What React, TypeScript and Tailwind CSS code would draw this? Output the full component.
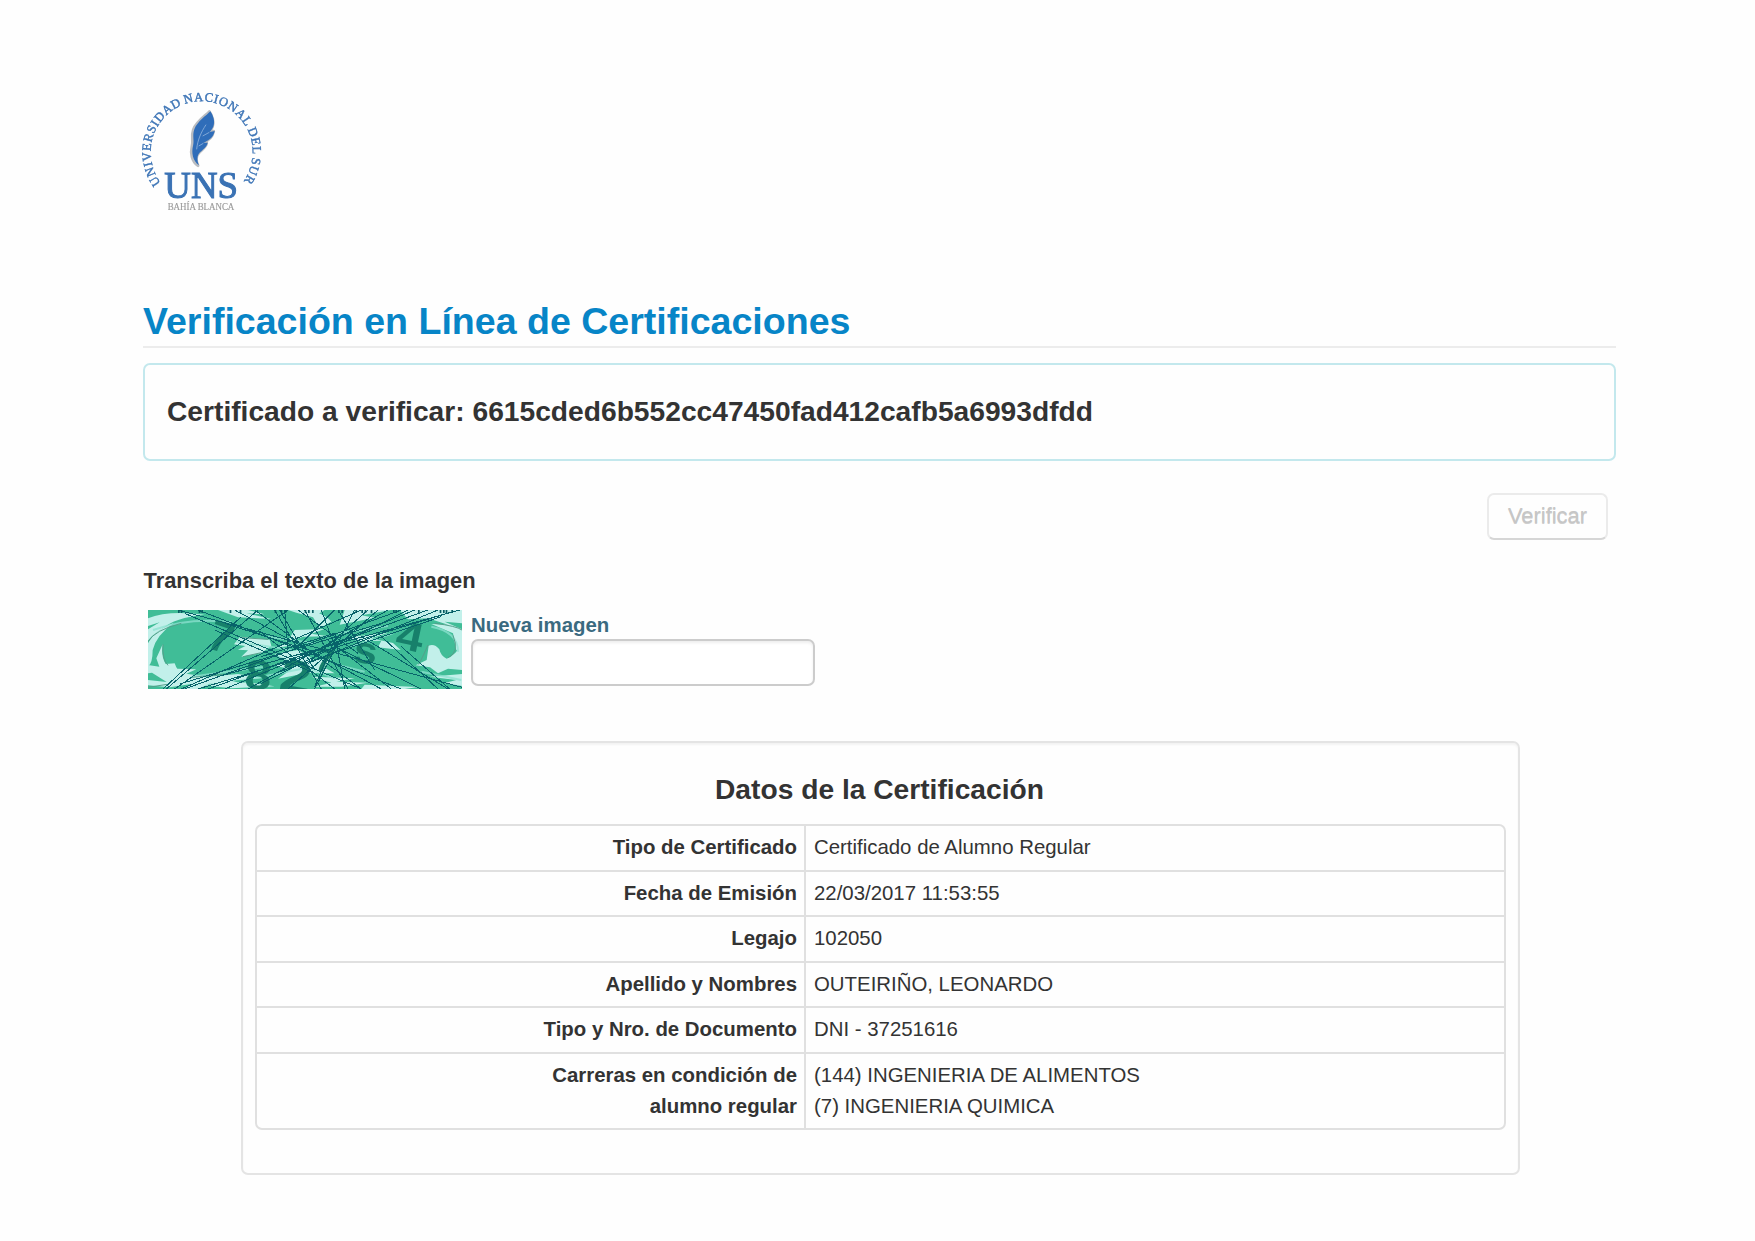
import React from "react";

const rows: { label: string[]; value: string[] }[] = [
  { label: ["Tipo de Certificado"], value: ["Certificado de Alumno Regular"] },
  { label: ["Fecha de Emisión"], value: ["22/03/2017 11:53:55"] },
  { label: ["Legajo"], value: ["102050"] },
  { label: ["Apellido y Nombres"], value: ["OUTEIRIÑO, LEONARDO"] },
  { label: ["Tipo y Nro. de Documento"], value: ["DNI - 37251616"] },
  {
    label: ["Carreras en condición de", "alumno regular"],
    value: ["(144) INGENIERIA DE ALIMENTOS", "(7) INGENIERIA QUIMICA"],
  },
];

const feather =
  "M241 94 C230 106 202 124 193 148 C186 168 194 182 189 198 C184 218 188 242 207 256 C200 240 201 226 210 217 C217 209 231 201 233 188 L220 188 C240 181 251 169 254 153 L239 156 C249 146 255 132 251 116 C248 106 245 99 241 94 Z";

function Logo() {
  return (
    <svg viewBox="0 0 435 435" className="block h-[145px] w-[145px] blur-[0.35px]" aria-label="Universidad Nacional del Sur">
      <defs>
        <path id="ring" d="M 93 309 A 153 153 0 1 1 337 309" />
      </defs>
      <text fontFamily="Liberation Serif, serif" fontSize="38" fill="#3f76b7" stroke="#3f76b7" strokeWidth="1.3" wordSpacing="-3">
        <textPath href="#ring" textLength="672" lengthAdjust="spacing">
          UNIVERSIDAD NACIONAL DEL SUR
        </textPath>
      </text>
      <path d={feather} transform="translate(-3 1)" fill="#b3b6ba" stroke="#b9bcc0" strokeWidth="9" strokeLinejoin="round" />
      <path d={feather} fill="#2f6db9" />
      <path d="M228 134 C214 156 203 178 200 208 M238 157 L218 168 M220 190 L206 198" fill="none" stroke="#8fb2dc" strokeWidth="2.5" />
      <text x="103" y="353" textLength="221" lengthAdjust="spacingAndGlyphs" fontFamily="Liberation Serif, serif" fontSize="111" fill="#3a72b4" stroke="#3a72b4" strokeWidth="3">
        UNS
      </text>
      <text x="113" y="389" textLength="200" lengthAdjust="spacingAndGlyphs" fontFamily="Liberation Serif, serif" fontSize="29" fill="#9a9a9a" stroke="#9a9a9a" strokeWidth="0.5">
        BAHÍA BLANCA
      </text>
    </svg>
  );
}

const strands = [
  "M90 0L942 232", "M150 0L760 237", "M55 237L330 0", "M80 237L420 0", "M45 237L280 20", "M100 237L640 0",
  "M110 237L760 0", "M150 237L905 8", "M180 237L840 0", "M95 222L700 40", "M210 200L935 0", "M110 10L640 237",
  "M260 0L700 237", "M320 0L640 237", "M380 0L520 237", "M395 0L500 180", "M410 0L420 120", "M470 0L600 237",
  "M450 0L630 130", "M560 0L440 120", "M570 0L680 180", "M620 0L500 237", "M660 0L490 150", "M690 0L420 237",
  "M720 0L300 237", "M780 0L340 220", "M800 0L230 237", "M540 90L730 237", "M560 110L820 237", "M640 80L900 237",
  "M690 70L870 237", "M760 110L905 237", "M230 40L480 120", "M200 60L500 190", "M330 60L560 237", "M870 0L480 160",
  "M880 20L380 190", "M340 140L560 70", "M370 170L610 80", "M500 230L560 90", "M590 237L560 70", "M520 0L560 110",
];

const ticks = [90, 98, 152, 160, 245, 275, 380, 398, 410, 470, 480, 492, 570, 580, 622, 640, 650, 668, 735, 742, 810, 875, 885, 893, 910];

function Captcha() {
  return (
    <div className="h-[79px] w-[314px] overflow-hidden">
      <svg viewBox="0 0 942 237" preserveAspectRatio="none" className="block h-[79px] w-[314px] blur-[0.4px]">
        <rect width="942" height="237" fill="#40bd97" />
        <g fill="#c2f0ea">
          <path d="M0 25Q60 0 170 14Q80 22 42 57Q12 75 0 92V58L35 37L0 48Z" />
          <path d="M0 100Q18 62 78 38Q25 75 14 120Q14 160 0 170Z" />
          <path d="M44 103Q38 136 53 162L80 160Q84 172 88 176L145 178L115 191L178 200L270 192L345 204L250 212L300 225L185 221L150 237H110L130 222L65 232L0 226V210L56 216L12 188L0 190V165L34 170L25 145Z" />
          <path d="M276 80L365 89L370 108L338 130L280 140L300 121L270 119L292 108L258 103Z" />
          <path d="M210 0H300L350 13L296 10L370 27L270 22Z M420 0H530L495 22L445 8Z M510 8Q540 20 550 35L515 55L495 22Z M590 0H730L640 16L680 23L575 44Z M755 0H942V40L890 35L942 58V145L924 118L915 70L850 42L900 44L840 25L780 28Z" />
          <path d="M600 82L720 68L670 85L735 99L758 120L690 112L700 92L630 94Z" />
          <path d="M380 132L450 120L500 150L550 146L528 172L560 190L480 188L390 206L430 178L374 166L425 160Z" />
          <path d="M440 60L530 57L490 71L540 79L465 80L400 104L450 104L380 114L420 92Z" />
          <path d="M842 107Q860 100 874 118Q878 138 896 146Q922 138 942 100V180L900 176L870 190L846 172L803 166L836 150Z" />
          <path d="M490 200L620 205L565 215L660 218L580 230H500L550 218Z M160 225L300 217L380 229L250 235Z M845 200L942 192V228L890 219L925 210Z M650 224L810 231L770 237H640Z" />
        </g>
        <g fill="none" stroke="#8ee1d0" strokeWidth="6" opacity="0.75">
          <path d="M15 60Q130 20 250 37M265 95L430 120M360 80L500 100M390 140L560 205M570 70L720 48M610 110L735 70M130 200L350 170M320 205L470 175M850 50Q930 65 930 125M820 185L940 210M570 165L650 185" />
        </g>
        <g fill="none" stroke="#559f8b" strokeWidth="3">
          <path d="M0 95Q20 60 100 40M45 103Q42 148 60 166M282 83L360 88M285 140L340 128M840 105Q820 150 812 164M900 143Q936 127 915 76M860 40Q925 48 942 60M130 202L245 192M0 232L58 223" />
        </g>
        <g fontFamily="Liberation Sans, sans-serif" fontWeight="bold" fill="#17806b">
          <text fontSize="130" transform="translate(172 112) rotate(18)">7</text>
          <text fontSize="125" transform="translate(287 234) rotate(5) scale(1.15 1)">8</text>
          <text fontSize="135" transform="translate(390 236) rotate(10) scale(1.25 1)">2</text>
          <text fontSize="100" transform="translate(497 181) rotate(8)">7</text>
          <text fontSize="112" transform="translate(612 154) rotate(9) scale(1.15 1)">s</text>
          <text fontSize="122" transform="translate(738 112) rotate(12) scale(1.2 1)">4</text>
        </g>
        <g fill="none" stroke="#07636a" strokeWidth="3" shapeRendering="crispEdges">
          {strands.map((d) => (
            <path key={d} d={d} />
          ))}
        </g>
        <g fill="#075b62">
          {ticks.map((x) => (
            <rect key={x} x={x} width="5" height="9" />
          ))}
        </g>
      </svg>
    </div>
  );
}

export default function App() {
  return (
    <main className="h-[1241px] w-full overflow-hidden bg-[#fefefe] pl-[143px] pr-[139px] pt-20 font-['Liberation_Sans',Arial,sans-serif] text-[#333]">
      <header className="-ml-[13px] h-[214px]">
        <Logo />
      </header>

      <h1 className="h-[54px] border-b-2 border-[#ececec] pt-[1px] text-[37.55px] font-bold leading-[52px] text-[#0785c7]">
        Verificación en Línea de Certificaciones
      </h1>

      <section className="mt-[15px] flex h-[98px] items-center rounded-[7px] border-2 border-[#c3e8ed] pb-[2px] pl-[22px]">
        <h2 className="text-[28.2px] font-bold leading-[31px]">
          Certificado a verificar: 6615cded6b552cc47450fad412cafb5a6993dfdd
        </h2>
      </section>

      <div className="mt-8 flex justify-end pr-[8px]">
        <button className="h-[47px] w-[121px] rounded-[7px] border-2 border-[#ebebeb] border-b-[#d6d6d6] pb-[2px] text-[21.9px] leading-[40px] text-[#c6c6c6] [text-shadow:0_1px_0_#cfcfcf]">
          Verificar
        </button>
      </div>

      <div className="mt-[25px] pl-[0.5px] text-[21.9px] font-bold leading-[31px]">Transcriba el texto de la imagen</div>

      <div className="mt-[12px] flex h-[78px] pl-[5px]">
        <div className="mt-[2px]">
          <Captcha />
        </div>
        <div className="ml-[9px] w-[344px]">
          <a className="block h-[31px] text-[20.4px] font-bold leading-[34px] text-[#3a6a80]">Nueva imagen</a>
          <input
            aria-label="Texto de la imagen"
            className="block h-[47px] w-[344px] rounded-[7px] border-2 border-[#cccccc] bg-white shadow-[inset_0_2px_3px_#eeeeee] outline-none"
          />
        </div>
      </div>

      <section className="ml-[98px] mt-[55px] h-[434px] w-[1279px] rounded-[7px] border-2 border-[#e4e4e4] px-3 pt-[29px] shadow-[inset_0_2px_2px_#f3f3f3]">
        <h2 className="pr-[2px] text-center text-[28.2px] font-bold leading-[34px]">Datos de la Certificación</h2>
        <div className="mt-[18px] rounded-[7px] border-2 border-[#e0e0e0] text-[20.4px] leading-[31.3px]">
          {rows.map((row, i) => (
            <div
              key={row.label[0]}
              className={i === 0 ? "flex h-[44px]" : i === 5 ? "flex h-[76px] border-t-2 border-[#e0e0e0]" : "flex h-[45.4px] border-t-2 border-[#e0e0e0]"}
            >
              <div className="w-[549px] border-r-2 border-[#e0e0e0] pr-[7px] pt-[6px] text-right font-bold">
                {row.label.map((line) => (
                  <div key={line}>{line}</div>
                ))}
              </div>
              <div className="pl-[8px] pt-[6px]">
                {row.value.map((line) => (
                  <div key={line}>{line}</div>
                ))}
              </div>
            </div>
          ))}
        </div>
      </section>
    </main>
  );
}
